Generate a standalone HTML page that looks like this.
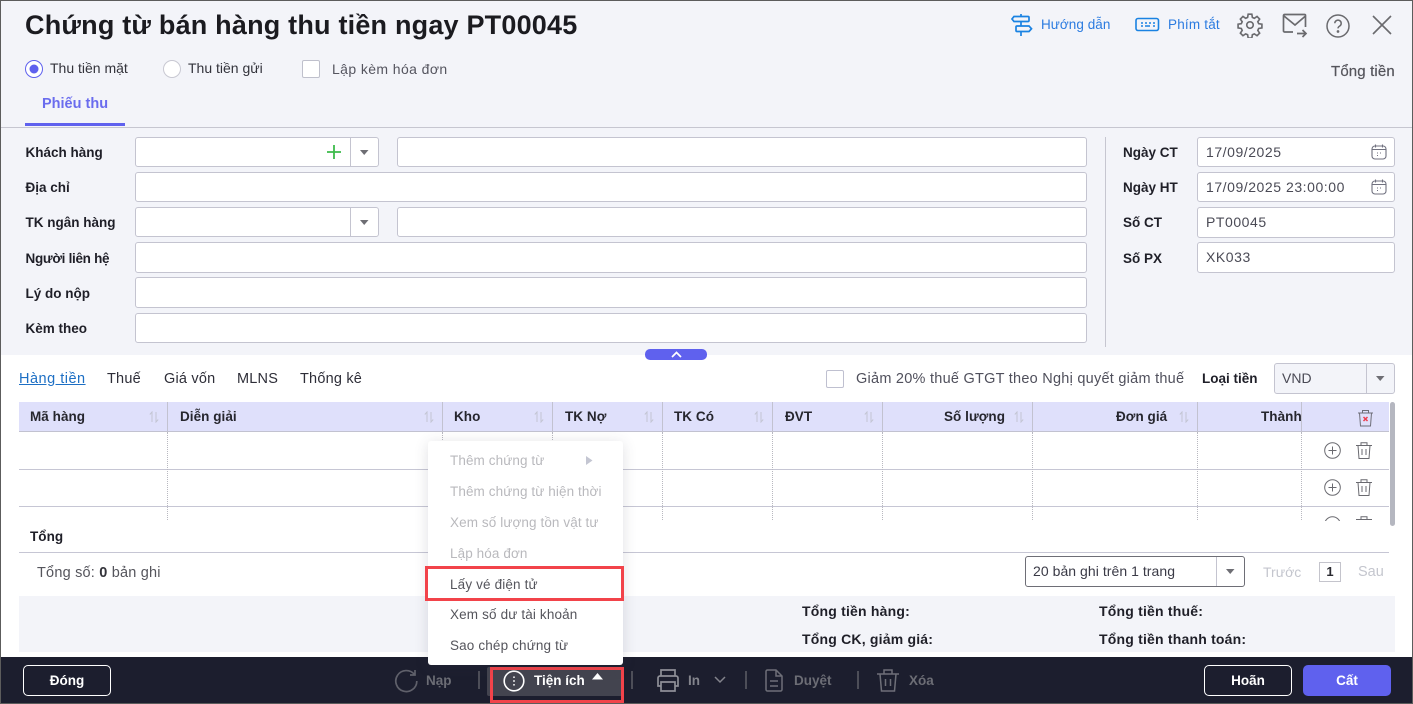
<!DOCTYPE html>
<html lang="vi"><head><meta charset="utf-8"><title>Chứng từ bán hàng thu tiền ngay</title>
<style>
html,body{margin:0;padding:0;background:#fff}
#p{position:relative;width:1413px;height:704px;overflow:hidden;background:#fff;font-family:"Liberation Sans",sans-serif;font-size:14px;color:#2b2b36}
#p div,#p svg{position:absolute}
.t{white-space:nowrap;line-height:20px;height:20px}
.b{font-weight:700;color:#1f1f28;font-size:13.5px;margin-top:1px}
.i{background:#fff;border:1px solid #c4c4d0;border-radius:3px;box-sizing:border-box;height:30px}
.h{font-weight:700;color:#26262e;font-size:13.5px;letter-spacing:.05px;margin-top:1px}
.m{color:#b9b9bd;font-size:13.5px;letter-spacing:.1px;margin-top:1px}
.d{color:#55555c;font-size:13.5px;letter-spacing:.15px;margin-top:1px}
.v{width:0;border-left:1px dotted #b8b8c0;top:432px;height:88px}
.s{width:1px;background:#c2c2d0;top:402px;height:30px}
.tb{color:#6c6d75;font-weight:700;font-size:13.5px;margin-top:1px}
.sep{width:2px;height:18px;top:671px;background:#4d4e58}
.val{color:#4a4a55;letter-spacing:.55px;font-size:14px}
.tab{font-size:14.5px;color:#2e2e38;letter-spacing:.2px}
.sum{font-size:14px;letter-spacing:.2px;margin-top:0}
.btn{box-sizing:border-box;border-radius:5px;color:#fff;font-weight:700;font-size:13.5px;text-align:center}
</style></head><body>
<div id="p">
<div style="left:0;top:0;width:1413px;height:355px;background:#f3f4f9"></div>
<div class="t" style="left:25px;top:9px;height:32px;line-height:32px;font-size:27px;font-weight:700;color:#1b1b20;letter-spacing:.2px">Chứng từ bán hàng thu tiền ngay PT00045</div>

<svg style="left:1011px;top:14px" width="22" height="23" viewBox="0 0 22 23" fill="none" stroke="#1a82e2" stroke-width="1.700"><path d="M3 2.500h14a1 1 0 0 1 1 1v3a1 1 0 0 1-1 1H3L1 5zM6 12h12l2.500 2.700L18 17.500H6a1 1 0 0 1-1-1v-3.500a1 1 0 0 1 1-1zM10 0v2.500M10 7.500V12M10 17.500V22"/></svg>
<div class="t" style="left:1041px;top:15px;color:#2b7be0;font-size:13.5px;letter-spacing:.05px">Hướng dẫn</div>
<svg style="left:1135px;top:17px" width="25" height="15" viewBox="0 0 25 15" fill="none" stroke="#1a82e2"><rect x="1" y="1.500" width="22.500" height="12" rx="2" stroke-width="1.600"/><path d="M6 6h2M10 6h2M14 6h2M18 6h2M6 9h2M10 9h5M18 9h2" stroke-width="1.500"/></svg>
<div class="t" style="left:1168px;top:15px;color:#2b7be0;font-size:13.5px;letter-spacing:.2px">Phím tắt</div>
<svg style="left:1237px;top:12px" width="26" height="26" viewBox="0 0 24 24" fill="none" stroke="#6a6a6e" stroke-width="1.500"><circle cx="12" cy="12" r="3"/><path d="M10.300 2h3.400l.5 3 1.800.8 2.500-1.700 2.400 2.400-1.700 2.500.8 1.800 3 .5v3.400l-3 .5-.8 1.800 1.700 2.500-2.400 2.400-2.500-1.700-1.800.8-.5 3h-3.400l-.5-3-1.800-.8-2.500 1.700-2.400-2.400 1.700-2.500-.8-1.800-3-.5v-3.400l3-.5.8-1.800-1.700-2.500 2.400-2.400 2.500 1.700 1.800-.8z"/></svg>
<svg style="left:1282px;top:13px" width="26" height="25" viewBox="0 0 26 25" fill="none" stroke="#6a6a6e" stroke-width="1.700"><path d="M11 19H2.500a1 1 0 0 1-1-1V2.500a1 1 0 0 1 1-1h20a1 1 0 0 1 1 1V14M2 3l11 9 10.500-9M15 20.500h9M20.500 17l3.500 3.500-3.500 3.500"/></svg>
<svg style="left:1326px;top:14px" width="24" height="24" viewBox="0 0 24 24" fill="none" stroke="#6a6a6e" stroke-width="1.500"><circle cx="12" cy="12" r="11"/><path d="M8.800 9.300a3.200 3.200 0 1 1 4.800 2.800c-1 .6-1.600 1.100-1.600 2.300"/><circle cx="12" cy="17.500" r=".6" fill="#6a6a6e"/></svg>
<svg style="left:1372px;top:15px" width="20" height="20" viewBox="0 0 20 20" stroke="#6a6a6e" stroke-width="1.600"><path d="M1 1l18 18M19 1L1 19"/></svg>

<svg style="left:25px;top:60px" width="18" height="18"><circle cx="9" cy="9" r="8.500" fill="#fff" stroke="#5f61ee"/><circle cx="9" cy="9" r="4.500" fill="#5f61ee"/></svg>
<div class="t" style="left:50px;top:58px;font-size:14px;color:#33333b">Thu tiền mặt</div>
<svg style="left:163px;top:60px" width="18" height="18"><circle cx="9" cy="9" r="8.500" fill="#fff" stroke="#c8c8d2"/></svg>
<div class="t" style="left:188px;top:58px;font-size:14px;color:#33333b">Thu tiền gửi</div>
<div style="left:302px;top:60px;width:18px;height:18px;box-sizing:border-box;background:#fff;border:1px solid #bfc0cc;border-radius:2px"></div>
<div class="t" style="left:332px;top:59px;font-size:14px;color:#55555f;letter-spacing:.4px">Lập kèm hóa đơn</div>
<div class="t" style="left:1331px;top:62px;font-size:15px;color:#55555c;letter-spacing:.15px;-webkit-text-stroke:.2px #55555c">Tổng tiền</div>
<div class="t" style="left:42px;top:94px;font-size:14.5px;font-weight:700;color:#6a6cee">Phiếu thu</div>
<div style="left:25px;top:123px;width:100px;height:3px;background:#5f61ee"></div>
<div style="left:0;top:127px;width:1413px;height:1px;background:#c6c6d0"></div>

<div class="t b" style="left:25.500px;top:142px">Khách hàng</div>
<div class="i" style="left:135px;top:137px;width:244px"></div>
<div style="left:350px;top:138px;width:1px;height:28px;background:#c4c4d0"></div>
<svg style="left:327px;top:145px" width="14" height="14" stroke="#3dbb4b" stroke-width="1.800"><path d="M7 0v14M0 7h14"/></svg>
<svg style="left:360px;top:150px" width="9" height="6"><path d="M0 0h8.500L4.200 5z" fill="#6e6e74"/></svg>
<div class="i" style="left:397px;top:137px;width:690px"></div>

<div class="t b" style="left:25.500px;top:177px">Địa chỉ</div>
<div class="i" style="left:135px;top:172px;width:952px"></div>
<div class="t b" style="left:25.500px;top:212px">TK ngân hàng</div>
<div class="i" style="left:135px;top:207px;width:244px"></div>
<div style="left:350px;top:208px;width:1px;height:28px;background:#c4c4d0"></div>
<svg style="left:360px;top:220px" width="9" height="6"><path d="M0 0h8.500L4.200 5z" fill="#6e6e74"/></svg>
<div class="i" style="left:397px;top:207px;width:690px"></div>
<div class="t b" style="left:25.500px;top:248px;letter-spacing:-.3px">Người liên hệ</div>
<div class="i" style="left:135px;top:242px;width:952px;height:31px"></div>
<div class="t b" style="left:25.500px;top:283px">Lý do nộp</div>
<div class="i" style="left:135px;top:277px;width:952px;height:31px"></div>
<div class="t b" style="left:25.500px;top:318px">Kèm theo</div>
<div class="i" style="left:135px;top:313px;width:952px"></div>

<div style="left:1105px;top:137px;width:1px;height:210px;background:#c6c6d0"></div>
<div class="t b" style="left:1123px;top:142px">Ngày CT</div>
<div class="i" style="left:1197px;top:137px;width:198px"></div>
<div class="t val" style="left:1206px;top:142px">17/09/2025</div>
<svg style="left:1371px;top:144px" width="16" height="16" viewBox="0 0 16 16" fill="none" stroke="#70717f" stroke-width="1.100"><rect x="1" y="2" width="14" height="13" rx="3"/><path d="M1 5.500h14M4.500 .5v3M11.500 .5v3M6 9h1M9 9h1M6 11.500h1"/></svg>
<div class="t b" style="left:1123px;top:177px">Ngày HT</div>
<div class="i" style="left:1197px;top:172px;width:198px"></div>
<div class="t val" style="left:1206px;top:177px">17/09/2025 23:00:00</div>
<svg style="left:1371px;top:179px" width="16" height="16" viewBox="0 0 16 16" fill="none" stroke="#70717f" stroke-width="1.100"><rect x="1" y="2" width="14" height="13" rx="3"/><path d="M1 5.500h14M4.500 .5v3M11.500 .5v3M6 9h1M9 9h1M6 11.500h1"/></svg>
<div class="t b" style="left:1123px;top:212px">Số CT</div>
<div class="i" style="left:1197px;top:207px;width:198px;height:31px"></div>
<div class="t val" style="left:1206px;top:212px">PT00045</div>
<div class="t b" style="left:1123px;top:248px">Số PX</div>
<div class="i" style="left:1197px;top:242px;width:198px;height:31px"></div>
<div class="t val" style="left:1206px;top:247px">XK033</div>

<div style="left:645px;top:349px;width:62px;height:11px;border-radius:5px;background:#5f61ee"></div>
<svg style="left:671px;top:351px" width="11" height="7" fill="none" stroke="#fff" stroke-width="1.700"><path d="M1 6l4.500-4.500L10 6"/></svg>

<div class="t tab" style="left:19px;top:369px;color:#1d6fc4;text-decoration:underline;letter-spacing:.5px">Hàng tiền</div>
<div class="t tab" style="left:107px;top:369px">Thuế</div>
<div class="t tab" style="left:164px;top:369px">Giá vốn</div>
<div class="t tab" style="left:237px;top:369px">MLNS</div>
<div class="t tab" style="left:300px;top:369px">Thống kê</div>
<div style="left:826px;top:370px;width:18px;height:18px;box-sizing:border-box;background:#fff;border:1px solid #bfc0d0;border-radius:2px"></div>
<div class="t" style="left:856px;top:369px;font-size:14.5px;color:#50505c;letter-spacing:.25px">Giảm 20% thuế GTGT theo Nghị quyết giảm thuế</div>
<div class="t b" style="left:1202px;top:368px">Loại tiền</div>
<div class="i" style="left:1274px;top:363px;width:121px;height:31px;background:#f3f4f9"></div>
<div style="left:1366px;top:364px;width:1px;height:29px;background:#c4c4d0"></div>
<div class="t" style="left:1282px;top:368px;color:#4a4a55;font-size:14px">VND</div>
<svg style="left:1376px;top:376px" width="9" height="6"><path d="M0 0h8.500L4.200 5z" fill="#6e6e74"/></svg>

<div style="left:19px;top:402px;width:1370px;height:29px;background:#dfe0fb"></div>
<div style="left:19px;top:431px;width:1370px;height:1px;background:#c2c2d0"></div>
<div style="left:19px;top:469px;width:1370px;height:1px;background:#c6c6d4"></div>
<div style="left:19px;top:506px;width:1370px;height:1px;background:#c6c6d4"></div>
<div class="s" style="left:167px"></div><div class="s" style="left:442px"></div><div class="s" style="left:552px"></div><div class="s" style="left:662px"></div><div class="s" style="left:772px"></div><div class="s" style="left:882px"></div><div class="s" style="left:1032px"></div><div class="s" style="left:1197px"></div><div class="s" style="left:1301px"></div>
<div class="v" style="left:167px"></div><div class="v" style="left:442px"></div><div class="v" style="left:552px"></div><div class="v" style="left:662px"></div><div class="v" style="left:772px"></div><div class="v" style="left:882px"></div><div class="v" style="left:1032px"></div><div class="v" style="left:1197px"></div><div class="v" style="left:1301px"></div>

<div class="t h" style="left:30px;top:406px">Mã hàng</div>
<div class="t h" style="left:180px;top:406px">Diễn giải</div>
<div class="t h" style="left:454px;top:406px">Kho</div>
<div class="t h" style="left:565px;top:406px">TK Nợ</div>
<div class="t h" style="left:674px;top:406px">TK Có</div>
<div class="t h" style="left:785px;top:406px">ĐVT</div>
<div class="t h" style="left:944px;top:406px">Số lượng</div>
<div class="t h" style="left:1116px;top:406px">Đơn giá</div>
<div class="t h" style="left:1261px;top:406px;width:41px;overflow:hidden">Thành tiền</div>
<svg style="left:149px;top:411px" width="10" height="12" fill="none" stroke="#c3c5d3"><path d="M3 11V1L.8 3.500M7 1v10l2.200-2.500"/></svg>
<svg style="left:424px;top:411px" width="10" height="12" fill="none" stroke="#c3c5d3"><path d="M3 11V1L.8 3.500M7 1v10l2.200-2.500"/></svg>
<svg style="left:534px;top:411px" width="10" height="12" fill="none" stroke="#c3c5d3"><path d="M3 11V1L.8 3.500M7 1v10l2.200-2.500"/></svg>
<svg style="left:644px;top:411px" width="10" height="12" fill="none" stroke="#c3c5d3"><path d="M3 11V1L.8 3.500M7 1v10l2.200-2.500"/></svg>
<svg style="left:754px;top:411px" width="10" height="12" fill="none" stroke="#c3c5d3"><path d="M3 11V1L.8 3.500M7 1v10l2.200-2.500"/></svg>
<svg style="left:864px;top:411px" width="10" height="12" fill="none" stroke="#c3c5d3"><path d="M3 11V1L.8 3.500M7 1v10l2.200-2.500"/></svg>
<svg style="left:1014px;top:411px" width="10" height="12" fill="none" stroke="#c3c5d3"><path d="M3 11V1L.8 3.500M7 1v10l2.200-2.500"/></svg>
<svg style="left:1179px;top:411px" width="10" height="12" fill="none" stroke="#c3c5d3"><path d="M3 11V1L.8 3.500M7 1v10l2.200-2.500"/></svg>
<svg style="left:1357px;top:409px" width="17" height="18" viewBox="0 0 17 18" fill="none" stroke="#6e6e78"><path d="M1 4h15M5.500 4V1.500h6V4M2.500 4l1 13h10l1-13"/><path d="M6.500 8l4 4M10.500 8l-4 4" stroke="#ee3c4c" stroke-width="1.500"/></svg>

<svg style="left:1324px;top:442px" width="17" height="17" fill="none" stroke="#6a6a70"><circle cx="8.500" cy="8.500" r="7.800"/><path d="M8.500 4.500v8M4.500 8.500h8"/></svg>
<svg style="left:1356px;top:442px" width="16" height="17" viewBox="0 0 16 17" fill="none" stroke="#6a6a70"><path d="M0 3.500h16M5 3V.8h6V3M2 3.500l1 13h10l1-13M6 7v6M10 7v6"/></svg>
<svg style="left:1324px;top:479px" width="17" height="17" fill="none" stroke="#6a6a70"><circle cx="8.500" cy="8.500" r="7.800"/><path d="M8.500 4.500v8M4.500 8.500h8"/></svg>
<svg style="left:1356px;top:479px" width="16" height="17" viewBox="0 0 16 17" fill="none" stroke="#6a6a70"><path d="M0 3.500h16M5 3V.8h6V3M2 3.500l1 13h10l1-13M6 7v6M10 7v6"/></svg>
<svg style="left:1324px;top:516px" width="17" height="5" fill="none" stroke="#6a6a70"><circle cx="8.500" cy="8.500" r="7.800"/></svg>
<svg style="left:1356px;top:516px" width="16" height="5" viewBox="0 0 16 5" fill="none" stroke="#6a6a70"><path d="M0 3.500h16M5 3V.8h6V3"/></svg>
<div style="left:1390px;top:402px;width:5px;height:124px;background:#b5b7c0;border-radius:3px"></div>

<div class="t h" style="left:30px;top:527px;color:#1f1f28;margin-top:0">Tổng</div>
<div style="left:19px;top:552px;width:1370px;height:1px;background:#c6c6d4"></div>
<div class="t" style="left:37px;top:563px;color:#55555c;font-size:14.5px;letter-spacing:.2px">Tổng số: <b style="color:#33333a">0</b> bản ghi</div>
<div style="left:1025px;top:556px;width:220px;height:31px;box-sizing:border-box;border:1px solid #6e6e76;border-radius:3px;background:#fff"></div>
<div style="left:1216px;top:557px;width:1px;height:29px;background:#c4c4d0"></div>
<div class="t" style="left:1033px;top:561px;color:#3a3a46;font-size:14px;letter-spacing:.05px">20 bản ghi trên 1 trang</div>
<svg style="left:1226px;top:569px" width="9" height="6"><path d="M0 0h8.500L4.200 5z" fill="#6e6e74"/></svg>
<div class="t" style="left:1263px;top:562px;color:#c4c6ce;font-size:14px">Trước</div>
<div class="t" style="left:1319px;top:562px;width:22px;height:20px;box-sizing:border-box;border:1px solid #c4c4cc;text-align:center;line-height:18px;font-weight:700;font-size:13px;color:#2a2a30">1</div>
<div class="t" style="left:1358px;top:562px;color:#c4c6ce;font-size:14.5px">Sau</div>

<div style="left:19px;top:596px;width:1376px;height:56px;background:#f3f4f9"></div>
<div class="t b sum" style="left:802px;top:601px">Tổng tiền hàng:</div>
<div class="t b sum" style="left:802px;top:629px">Tổng CK, giảm giá:</div>
<div class="t b sum" style="left:1099px;top:601px">Tổng tiền thuế:</div>
<div class="t b sum" style="left:1099px;top:629px">Tổng tiền thanh toán:</div>

<div style="left:0;top:657px;width:1413px;height:47px;background:#1c1e2e"></div>
<div class="t btn" style="left:23px;top:665px;width:88px;height:31px;border:1px solid #fff;line-height:30px">Đóng</div>
<svg style="left:394px;top:669px" width="24" height="24" viewBox="0 0 24 24" fill="none" stroke="#5f606a" stroke-width="1.700"><path d="M20.500 5.500A10.500 10.500 0 1 0 22.800 12M21 1v5h-5"/></svg>
<div class="t tb" style="left:426px;top:670px">Nạp</div>
<div class="sep" style="left:478px"></div>
<div style="left:487px;top:667px;width:136px;height:29px;background:#43444f;border-radius:2px"></div>
<svg style="left:503px;top:670px" width="22" height="22" fill="none" stroke="#fff" stroke-width="1.600"><circle cx="11" cy="11" r="9.800"/><path d="M11 6.500v1.400M11 10.300v1.400M11 14.100v1.400" stroke-width="1.700"/></svg>
<div class="t" style="left:534px;top:671px;color:#fff;font-weight:700;font-size:13.5px">Tiện ích</div>
<svg style="left:592px;top:673px" width="11" height="7"><path d="M0 6.500L5.500 0 11 6.500z" fill="#fff"/></svg>
<div style="left:490px;top:667px;width:134px;height:36px;box-sizing:border-box;border:3px solid #f2434a"></div>
<div class="sep" style="left:631px"></div>
<svg style="left:656px;top:668px" width="24" height="25" viewBox="0 0 24 25" fill="none" stroke="#8e8f97" stroke-width="1.700"><path d="M5 8V2h14v6M5 18H2V10a2 2 0 0 1 2-2h16a2 2 0 0 1 2 2v8h-3M5 14h14v9H5z"/></svg>
<div class="t tb" style="left:688px;top:670px;color:#83848c">In</div>
<svg style="left:714px;top:676px" width="12" height="8" fill="none" stroke="#83848c" stroke-width="1.500"><path d="M1 1l5 5 5-5"/></svg>
<div class="sep" style="left:745px"></div>
<svg style="left:765px;top:669px" width="18" height="23" viewBox="0 0 18 23" fill="none" stroke="#6e6f78" stroke-width="1.500"><path d="M11 1H2.500A1.500 1.500 0 0 0 1 2.500v18A1.500 1.500 0 0 0 2.500 22h13a1.500 1.500 0 0 0 1.500-1.500V7zM11 1v6h6M5 12h8M5 17h8"/></svg>
<div class="t tb" style="left:794px;top:670px">Duyệt</div>
<div class="sep" style="left:857px"></div>
<svg style="left:877px;top:669px" width="22" height="23" viewBox="0 0 22 23" fill="none" stroke="#6e6f78" stroke-width="1.500"><path d="M0 5h22M7 4.500V1h8v3.500M3 5l1.500 17h13L19 5M8.500 10v7M13.500 10v7"/></svg>
<div class="t tb" style="left:909px;top:670px">Xóa</div>
<div class="t btn" style="left:1204px;top:665px;width:88px;height:31px;border:1px solid #fff;line-height:30px">Hoãn</div>
<div class="t btn" style="left:1303px;top:665px;width:88px;height:31px;background:#5f61ee;line-height:32px">Cất</div>

<div style="left:428px;top:441px;width:195px;height:224px;background:#fff;border-radius:3px;box-shadow:0 2px 14px rgba(60,60,80,.16)"></div>
<div class="t m" style="left:450px;top:450px">Thêm chứng từ</div>
<svg style="left:586px;top:456px" width="7" height="9"><path d="M0 0l6.500 4.500L0 9z" fill="#c4c6d2"/></svg>
<div class="t m" style="left:450px;top:481px">Thêm chứng từ hiện thời</div>
<div class="t m" style="left:450px;top:512px">Xem số lượng tồn vật tư</div>
<div class="t m" style="left:450px;top:543px">Lập hóa đơn</div>
<div class="t d" style="left:450px;top:574px">Lấy vé điện tử</div>
<div class="t d" style="left:450px;top:604px">Xem số dư tài khoản</div>
<div class="t d" style="left:450px;top:635px">Sao chép chứng từ</div>
<div style="left:425px;top:566px;width:199px;height:35px;box-sizing:border-box;border:3px solid #f2434a"></div>

<div style="left:0;top:0;width:1413px;height:1px;background:#5c5c5c"></div>
<div style="left:0;top:0;width:1px;height:704px;background:#5c5c5c"></div>
<div style="left:1412px;top:0;width:1px;height:704px;background:#5c5c5c"></div>
<div style="left:0;top:703px;width:1413px;height:1px;background:#5c5c5c"></div>
</div>
</body></html>
